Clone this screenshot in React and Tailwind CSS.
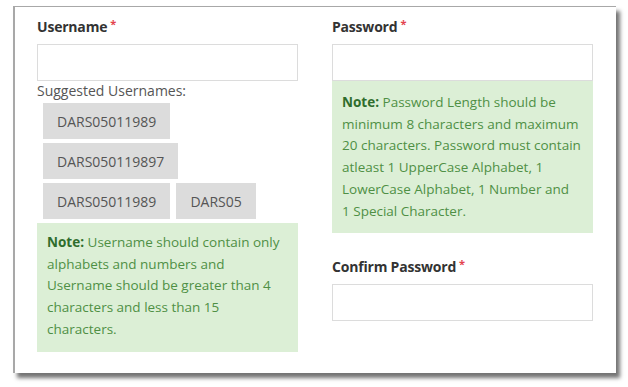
import React from "react";

const Label = ({ children }) => (
  <div className="flex items-start h-[25px] text-[14px] leading-[16px] font-bold text-[#333] tracking-[-0.2px]">
    {children}
    <span className="text-[#e3434e] text-[11px] ml-[3px] leading-none -mt-[1px]">*</span>
  </div>
);

const Input = () => (
  <input
    type="text"
    className="block w-full h-[37px] border border-[#dcdcdc] bg-white outline-none"
  />
);

const Chip = ({ children }) => (
  <span className="inline-flex items-center h-[36px] px-[14px] bg-[#dcdcdc] text-[14px] text-[#555]">
    {children}
  </span>
);

const Note = ({ children, className }) => (
  <div
    className={
      "bg-[#dcefd6] text-[#4f8f45] text-[13.5px] leading-[21.7px] px-[10px] " +
      className
    }
  >
    <b className="font-bold text-[#2f6d2c]">Note:</b> {children}
  </div>
);

export default function App() {
  return (
    <div
      className="w-[628px] h-[387px] bg-white pt-[6px] pl-[13px]"
      style={{ fontFamily: '"Open Sans", "Noto Sans", sans-serif' }}
    >
      <div className="w-[603px] h-[367px] bg-white border-l-[2px] border-t-[1px] border-[#a8a8a8] shadow-[4px_5px_4px_rgba(0,0,0,0.55)] flex gap-[34px] pl-[22px] pt-[12px]">
        <div className="w-[261px]">
          <Label>Username</Label>
          <Input />
          <div className="text-[14px] text-[#555] mt-[1px] leading-[18px]">
            Suggested Usernames:
          </div>
          <div className="flex flex-col gap-[4px] pl-[6px] mt-[3px]">
            <div className="flex">
              <Chip>DARS05011989</Chip>
            </div>
            <div className="flex">
              <Chip>DARS050119897</Chip>
            </div>
            <div className="flex gap-[6px]">
              <Chip>DARS05011989</Chip>
              <Chip>DARS05</Chip>
            </div>
          </div>
          <Note className="mt-[4px] pt-[9px] pb-[11px]">
            Username should contain only alphabets and numbers and Username
            should be greater than 4 characters and less than 15 characters.
          </Note>
        </div>
        <div className="w-[261px]">
          <Label>Password</Label>
          <Input />
          <Note className="pt-[11px] pb-[11px] whitespace-nowrap">
            Password Length should be
            <br />
            minimum 8 characters and maximum
            <br />
            20 characters. Password must contain
            <br />
            atleast 1 UpperCase Alphabet, 1
            <br />
            LowerCase Alphabet, 1 Number and
            <br />1 Special Character.
          </Note>
          <div className="mt-[26px]">
            <Label>Confirm Password</Label>
            <Input />
          </div>
        </div>
      </div>
    </div>
  );
}
